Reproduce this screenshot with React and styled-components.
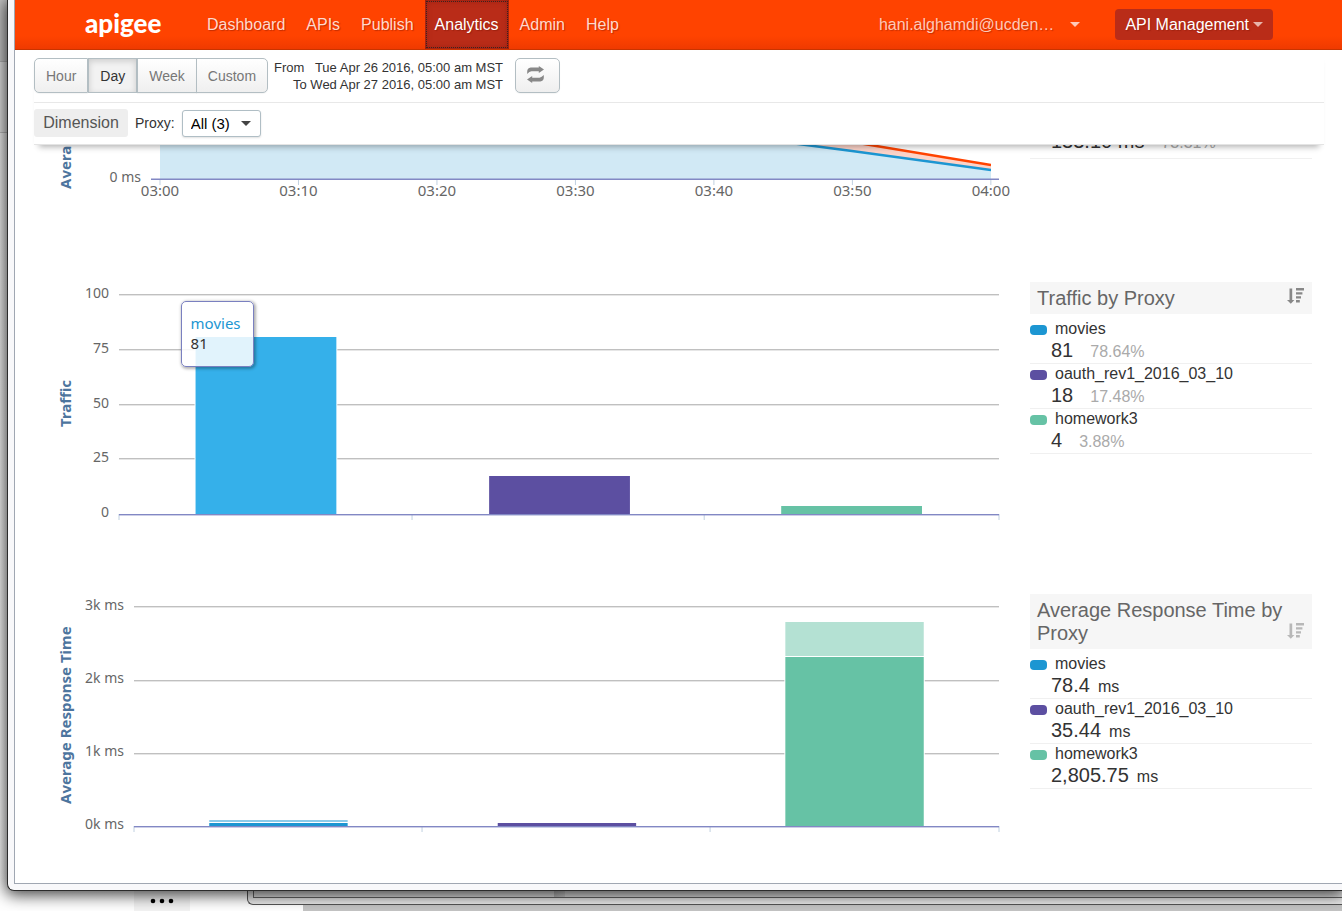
import React from "react";
import styled, { createGlobalStyle, css } from "styled-components";

const colors = {
  blue: "#1c96d2",
  blueHover: "#35b0ea",
  purple: "#5c4fa1",
  green: "#66c2a5",
  greenLight: "#b4e1d3",
  orange: "#ff4300",
  darkRed: "#b92c18",
  grid: "#c0c0c0",
  axis: "#8288c4",
  tick: "#c0d0e0",
};

const uiFont = '"Liberation Sans", Arial, sans-serif';
const chartFont = '"Noto Sans", "Open Sans", sans-serif';

const GlobalStyle = createGlobalStyle`
  *, *::before, *::after { box-sizing: border-box; }
  body { margin: 0; background: #fff; color: #333; font: 16px/20px ${uiFont}; }
  ul { list-style: none; margin: 0; padding: 0; }
  h2 { margin: 0; }
  button, select { font-family: inherit; }
`;

const Desktop = styled.div`
  display: flex;
  flex-direction: column;
  min-height: 100vh;
  overflow: hidden;
  background: linear-gradient(#c8c8c8 61px, #b5b5b5 61px, #b5b5b5 62px, #e2e2e2 62px, #e2e2e2 132px, #bdbdbd 132px, #bdbdbd 133px, #eee 133px, #fff 900px);
`;

const BrowserWindow = styled.div`
  position: relative;
  z-index: 1;
  margin-left: 7px;
  padding: 0 0 6px 6px;
  border: solid #2b2b2b;
  border-width: 0 0 1px 1px;
  border-bottom-left-radius: 7px;
  background: #f8f8fa;
  box-shadow: 0 2px 16px 2px rgba(0, 0, 0, 0.75);
`;

const Page = styled.div`
  border: solid #a0a7b2;
  border-width: 0 0 1px 1px;
  background: #fff;
`;

const Header = styled.header`
  display: flex;
  align-items: center;
  height: 50px;
  padding: 0 69px 0 70px;
  border-bottom: 1px solid #c93400;
  background: linear-gradient(${colors.orange} 36px, #ef3a00 49px);
`;

const Logo = styled.a`
  width: 112px;
  padding-bottom: 4px;
  color: #fff;
  font: 900 26px/40px Lato, sans-serif;
  text-decoration: none;
`;

const Nav = styled.nav`
  display: flex;
  flex: 1;
  gap: 1px;
`;

const NavLink = styled.a`
  height: 49px;
  padding: 0 10px;
  color: #ffd9cc;
  line-height: 49px;
  text-decoration: none;
  text-shadow: 1px 1px 1px rgba(120, 20, 0, 0.45);
  ${(p) =>
    p.$active &&
    css`
      background: ${colors.darkRed};
      box-shadow: inset 0 0 6px rgba(100, 10, 0, 0.5);
      color: #fff;
      outline: 1px dotted #3c2320;
      outline-offset: -2px;
    `}
`;

const MenuButton = styled.button`
  display: flex;
  align-items: center;
  gap: ${(p) => (p.$solid ? "4px" : "16px")};
  height: 31px;
  margin-left: ${(p) => (p.$solid ? "35px" : "0")};
  padding: 0 ${(p) => (p.$solid ? "10px" : "0")};
  border: 0;
  border-radius: 4px;
  background: ${(p) => (p.$solid ? colors.darkRed : "transparent")};
  color: ${(p) => (p.$solid ? "#fff" : "#ffc9b8")};
  font-size: 16px;
  text-shadow: 1px 1px 1px rgba(120, 20, 0, 0.4);
`;

const Caret = styled.span`
  border: 5px solid transparent;
  border-bottom: 0;
  border-top-color: ${(p) => p.$color};
`;

const Controls = styled.div`
  position: relative;
  z-index: 1;
  margin: 0 18px 0 19px;
  border-bottom: 1px solid #e4e4e4;
  background: #fff;
  box-shadow: 0 7px 6px -5px rgba(0, 0, 0, 0.3);
`;

const ControlRow = styled.div`
  display: flex;
  align-items: center;
  padding-bottom: 1px;
`;

const TimeRow = styled(ControlRow)`
  height: 53px;
  border-bottom: 1px solid #e8e8e8;
`;

const FilterRow = styled(ControlRow)`
  height: 41px;
  font-size: 14px;
`;

const ButtonGroup = styled.div`
  display: flex;
`;

const Button = styled.button`
  height: 35px;
  padding: 0 11px;
  border: 1px solid #b3bec3;
  background: linear-gradient(#fff, #efefef);
  color: #777;
  font-size: 14px;
  box-shadow: 0 1px 1px rgba(0, 0, 0, 0.04);
  ${(p) =>
    p.$active &&
    css`
      background: #f2f2f2;
      box-shadow: inset 0 2px 6px rgba(0, 0, 0, 0.16);
      color: #333;
    `}
  ${ButtonGroup} & + & {
    margin-left: -1px;
  }
  ${ButtonGroup} &:first-child {
    border-radius: 5px 0 0 5px;
  }
  ${ButtonGroup} &:last-child {
    border-radius: 0 5px 5px 0;
  }
`;

const RefreshButton = styled(Button)`
  width: 45px;
  margin-left: 12px;
  padding: 0 15px 3px 11px;
  border-radius: 5px;
  line-height: 0;
`;

const DateRange = styled.div`
  width: 235px;
  font-size: 13px;
  line-height: 17px;
  text-align: right;
  white-space: pre;
`;

const DimensionTag = styled.span`
  width: 94px;
  margin-right: 7px;
  border-radius: 3px;
  background: #eee;
  color: #555;
  font-size: 16px;
  line-height: 28px;
  text-align: center;
`;

const SelectWrap = styled.span`
  display: grid;
  align-items: center;
  margin-left: 7px;
  > * {
    grid-area: 1 / 1;
  }
  ${Caret} {
    justify-self: end;
    margin-right: 10px;
    pointer-events: none;
  }
`;

const Select = styled.select`
  width: 79px;
  height: 27px;
  padding: 0 8px;
  appearance: none;
  border: 1px solid #b0bec5;
  border-radius: 3px;
  background: #fff;
  color: #000;
  font-size: 15px;
  box-shadow: 0 1px 2px rgba(0, 0, 0, 0.12);
`;

const Panel = styled.section`
  display: flex;
  gap: 31px;
  height: ${(p) => p.$height}px;
  padding: 0 30px 0 19px;
`;

const CutPanel = styled(Panel)`
  align-items: flex-start;
  overflow: hidden;
`;

const Chart = styled.div`
  display: flex;
  flex: 1;
  min-width: 0;
  color: #666;
  font: 14px/18px ${chartFont};
`;

const AxisTitle = styled.div`
  align-self: flex-start;
  display: flex;
  justify-content: center;
  width: 18px;
  height: ${(p) => p.$height}px;
  margin-left: 22px;
  color: #4d759e;
  font-size: 15px;
  font-weight: 700;
  writing-mode: vertical-rl;
  transform: rotate(180deg);
  white-space: nowrap;
`;

const AxisTitleCut = styled(AxisTitle)`
  justify-content: flex-start;
`;

const AxisLabels = styled.div`
  display: flex;
  flex-direction: column;
  justify-content: space-between;
  width: ${(p) => p.$width}px;
  height: ${(p) => p.$height}px;
  margin-right: 10px;
  padding-top: 2px;
  text-align: right;
  white-space: nowrap;
`;

const CutAxisLabels = styled(AxisLabels)`
  justify-content: flex-end;
`;

const Plot = styled.div`
  position: relative;
  flex: 1;
  min-width: 0;
`;

const PlotSvg = styled.svg`
  display: block;
  width: 100%;
  height: ${(p) => p.$height}px;
  overflow: visible;
`;

const TickLabel = styled.text`
  fill: #666;
  font-size: 15px;
  text-anchor: middle;
`;

const Tooltip = styled.div`
  position: absolute;
  top: 19px;
  left: 7%;
  width: 73px;
  padding: 11px 9px 13px;
  border: 1px solid #7a80c0;
  border-radius: 5px;
  background: rgba(255, 255, 255, 0.85);
  box-shadow: 1px 1px 3px 1px rgba(0, 0, 0, 0.3);
  color: #333;
  font-size: 15px;
  line-height: 20px;
`;

const TooltipName = styled.div`
  color: ${colors.blue};
`;

const Side = styled.aside`
  width: 282px;
`;

const SideTitle = styled.h2`
  display: flex;
  align-items: flex-end;
  justify-content: space-between;
  margin-bottom: 5px;
  padding: 5px 8px 4px 7px;
  background: #f6f6f6;
  color: #666;
  font-size: 20px;
  font-weight: 400;
  line-height: 23px;
  svg {
    flex: none;
    margin-left: -4px;
    margin-bottom: 6px;
  }
`;

const Item = styled.li`
  height: 45px;
  border-bottom: 1px solid #f0f0f0;
`;

const ItemName = styled.div`
  display: flex;
  align-items: center;
  gap: 8px;
  line-height: 20px;
`;

const Swatch = styled.span`
  width: 17px;
  height: 10px;
  margin-top: 2px;
  border-radius: 4px;
  background: ${(p) => p.$color};
`;

const ItemValue = styled.div`
  display: flex;
  align-items: baseline;
  gap: ${(p) => (p.$wide ? "17px" : "8px")};
  padding-left: 21px;
  font-size: 16px;
  line-height: 22px;
`;

const Value = styled.span`
  font-size: 20px;
`;

const Percent = styled.span`
  color: #aaa;
`;

const Backdrop = styled.div`
  position: relative;
  flex: 1;
  min-height: 20px;
`;

const OverflowTab = styled.button`
  position: absolute;
  top: 0;
  left: 134px;
  width: 56px;
  height: 20px;
  padding: 0;
  border: 0;
  background: #f3f3f3;
  line-height: 0;
`;

const RearPage = styled.div`
  position: absolute;
  top: 0;
  left: 303px;
  right: 0;
  height: 20px;
  background: #c4c4c4;
`;

const RearWindow = styled.div`
  position: absolute;
  top: -20px;
  left: 247px;
  right: 0;
  height: 34px;
  padding: 0 0 6px 5px;
  border: solid #555;
  border-width: 0 0 1px 1px;
  border-bottom-left-radius: 6px;
  background: #eaeaea;
`;

const RearFrame = styled.div`
  height: 100%;
  border: solid #666;
  border-width: 0 0 1px 1px;
  background: linear-gradient(90deg, #e2e2e2 300px, #bbb 300px, #d0d0d0 311px, #e2e2e2 311px);
`;

function SortIcon({ faded }) {
  return (
    <svg width="17" height="16" viewBox="0 0 17 16" fill={faded ? "#b8b8b8" : "#888"} aria-hidden="true">
      <path d="M2.500 0.500h2.700v11.500h2.200L3.800 15.800 0 12h2.500z" />
      <path d="M9 0h8v2.400H9zM9 4.200h6.400v2.400H9zM9 8.200h5v2.400H9zM9 12h3.800v2.400H9z" />
    </svg>
  );
}

function RefreshIcon() {
  return (
    <svg width="17" height="17" viewBox="0 0 17 17" fill="#888" aria-hidden="true">
      <path d="M0.200 8V5.500Q0.200 2 3.700 1.500H11.800V0L17 3.500 11.800 7V5.300H4.500Q2.300 5.600 0.200 8z" />
      <path d="M16.800 9v2.500q0 3.500-3.500 4H5.200V17L0 13.500 5.200 10v1.700h7.300q2.200-0.300 4.300-2.700z" />
    </svg>
  );
}

function BarPlot({ height, lines, axis, ticks, children }) {
  return (
    <PlotSvg $height={height} aria-hidden="true">
      {lines.map((y) => (
        <rect key={y} x="0" y={y} width="100%" height="1.4" fill={colors.grid} />
      ))}
      {children}
      {ticks.map((x) => (
        <line key={x} x1={x} x2={x} y1={axis} y2={axis + 6} stroke={colors.tick} />
      ))}
      <rect x="0" y={axis} width="100%" height="1.4" fill={colors.axis} />
    </PlotSvg>
  );
}

function Bar({ x, y, width = "16%", bottom, fill }) {
  return <rect x={x} y={y} width={width} height={bottom - y} fill={fill} stroke="#fff" strokeWidth="2" paintOrder="stroke" />;
}

function Ranking({ title, faded, items }) {
  return (
    <Side>
      <SideTitle>
        {title}
        <SortIcon faded={faded} />
      </SideTitle>
      <ul>
        {items.map((item) => (
          <Item key={item.name}>
            <ItemName>
              <Swatch $color={item.color} />
              {item.name}
            </ItemName>
            <ItemValue $wide={Boolean(item.percent)}>
              <Value>{item.value}</Value>
              {item.percent ? <Percent>{item.percent}</Percent> : <span>ms</span>}
            </ItemValue>
          </Item>
        ))}
      </ul>
    </Side>
  );
}

const ScrolledItem = styled.div`
  height: 14px;
  width: 282px;
  display: flex;
  align-items: flex-end;
  padding-bottom: 4px;
  border-bottom: 1px solid #f0f0f0;
`;

const traffic = [
  { name: "movies", color: colors.blue, value: "81", percent: "78.64%" },
  { name: "oauth_rev1_2016_03_10", color: colors.purple, value: "18", percent: "17.48%" },
  { name: "homework3", color: colors.green, value: "4", percent: "3.88%" },
];

const responseTimes = [
  { name: "movies", color: colors.blue, value: "78.4" },
  { name: "oauth_rev1_2016_03_10", color: colors.purple, value: "35.44" },
  { name: "homework3", color: colors.green, value: "2,805.75" },
];

const times = ["03:00", "03:10", "03:20", "03:30", "03:40", "03:50", "04:00"];

const navItems = ["Dashboard", "APIs", "Publish", "Analytics", "Admin", "Help"];

export default function App() {
  return (
    <Desktop>
      <GlobalStyle />
      <BrowserWindow>
        <Page>
          <Header>
            <Logo href="#">apigee</Logo>
            <Nav>
              {navItems.map((item) => (
                <NavLink key={item} href="#" $active={item === "Analytics"}>
                  {item}
                </NavLink>
              ))}
            </Nav>
            <MenuButton>
              hani.alghamdi@ucden…
              <Caret $color="#ffc9b8" />
            </MenuButton>
            <MenuButton $solid>
              API Management
              <Caret $color="#e8b4aa" />
            </MenuButton>
          </Header>

          <Controls>
            <TimeRow>
              <ButtonGroup>
                {["Hour", "Day", "Week", "Custom"].map((label) => (
                  <Button key={label} $active={label === "Day"}>
                    {label}
                  </Button>
                ))}
              </ButtonGroup>
              <DateRange>
                <div>{"From   Tue Apr 26 2016, 05:00 am MST"}</div>
                <div>To Wed Apr 27 2016, 05:00 am MST</div>
              </DateRange>
              <RefreshButton aria-label="Refresh">
                <RefreshIcon />
              </RefreshButton>
            </TimeRow>
            <FilterRow>
              <DimensionTag>Dimension</DimensionTag>
              <label htmlFor="proxy">Proxy:</label>
              <SelectWrap>
                <Select id="proxy">
                  <option>All (3)</option>
                </Select>
                <Caret $color="#444" />
              </SelectWrap>
            </FilterRow>
          </Controls>

          <CutPanel $height={137}>
            <Chart>
              <AxisTitleCut $height={44}>Average Response Time</AxisTitleCut>
              <CutAxisLabels $width={67} $height={41}>
                <span>0 ms</span>
              </CutAxisLabels>
              <Plot>
                <PlotSvg $height={60} role="img" aria-label="Average response time by minute">
                  <svg x="1.06%" y="0" width="98%" height="34" viewBox="0 0 831 34" preserveAspectRatio="none">
                    <path d="M0 -4H647L692 6 831 25V34H0z" fill="#d1e9f5" />
                    <path d="M600 -6L692 6 831 25V20L692 -4z" fill="#fcd3c8" />
                    <path d="M600 -6L692 6 831 25" fill="none" stroke={colors.blue} strokeWidth="2.500" vectorEffect="non-scaling-stroke" />
                    <path d="M660 -8L692 -3 831 20" fill="none" stroke={colors.orange} strokeWidth="2.500" vectorEffect="non-scaling-stroke" />
                  </svg>
                  <rect x="0" y="33.500" width="100%" height="1.500" fill={colors.axis} />
                  {times.map((time, i) => {
                    const x = `${1.06 + i * 16.33}%`;
                    return (
                      <g key={time}>
                        <line x1={x} x2={x} y1="35" y2="40" stroke={colors.tick} />
                        <TickLabel x={x} y="51">
                          {time}
                        </TickLabel>
                      </g>
                    );
                  })}
                </PlotSvg>
              </Plot>
            </Chart>
            <ScrolledItem>
              <ItemValue $wide>
                <Value>133.10 ms</Value>
                <Percent>73.31%</Percent>
              </ItemValue>
            </ScrolledItem>
          </CutPanel>

          <Panel $height={312}>
            <Chart>
              <AxisTitle $height={243}>Traffic</AxisTitle>
              <AxisLabels $width={35} $height={239}>
                {["100", "75", "50", "25", "0"].map((label) => (
                  <span key={label}>{label}</span>
                ))}
              </AxisLabels>
              <Plot>
                <BarPlot height={240} lines={[12, 67, 122, 176]} axis={232} ticks={["0%", "33.300%", "66.500%", "100%"]}>
                  <Bar x="8.700%" y={55} bottom={232} fill={colors.blueHover} />
                  <Bar x="42.060%" y={194} bottom={232} fill={colors.purple} />
                  <Bar x="75.250%" y={224} bottom={232} fill={colors.green} />
                </BarPlot>
                <Tooltip>
                  <TooltipName>movies</TooltipName>
                  <div>81</div>
                </Tooltip>
              </Plot>
            </Chart>
            <Ranking title="Traffic by Proxy" items={traffic} />
          </Panel>

          <Panel $height={289}>
            <Chart>
              <AxisTitle $height={243}>Average Response Time</AxisTitle>
              <AxisLabels $width={50} $height={239}>
                {["3k ms", "2k ms", "1k ms", "0k ms"].map((label) => (
                  <span key={label}>{label}</span>
                ))}
              </AxisLabels>
              <Plot>
                <BarPlot height={240} lines={[12, 86, 159]} axis={232} ticks={["0%", "33.300%", "66.600%", "100%"]}>
                  <Bar x="8.700%" y={226} bottom={228} fill="#8ccbe9" />
                  <Bar x="8.700%" y={229} bottom={232} fill={colors.blue} />
                  <Bar x="42.050%" y={229} bottom={232} fill={colors.purple} />
                  <Bar x="75.300%" y={28} bottom={62} fill={colors.greenLight} />
                  <Bar x="75.300%" y={63} bottom={232} fill={colors.green} />
                </BarPlot>
              </Plot>
            </Chart>
            <Ranking title="Average Response Time by Proxy" faded items={responseTimes} />
          </Panel>
        </Page>
      </BrowserWindow>

      <Backdrop>
        <OverflowTab aria-label="More">
          <svg width="26" height="6" viewBox="0 0 26 6" aria-hidden="true">
            <circle cx="4" cy="3" r="2.300" />
            <circle cx="13" cy="3" r="2.300" />
            <circle cx="22" cy="3" r="2.300" />
          </svg>
        </OverflowTab>
        <RearPage />
        <RearWindow>
          <RearFrame />
        </RearWindow>
      </Backdrop>
    </Desktop>
  );
}
